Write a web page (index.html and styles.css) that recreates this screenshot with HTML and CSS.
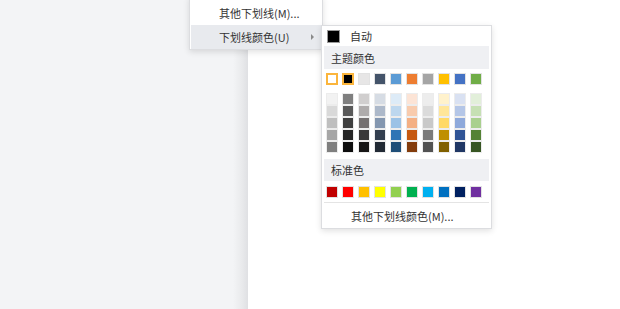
FILE: index.html
```html
<!DOCTYPE html>
<html lang="zh-CN">
<head>
<meta charset="utf-8">
<title>下划线颜色</title>
<link rel="stylesheet" href="styles.css">
</head>
<body>
<div class="page">
  <div class="sidebar"></div>
  <div class="doc"></div>
</div>

<div class="menu menu-main">
  <div class="item">其他下划线(M)...</div>
  <div class="item active">下划线颜色(U)<span class="arrow"></span></div>
</div>

<div class="menu menu-color">
  <div class="auto"><span class="auto-swatch"></span><span>自动</span></div>
  <div class="section">主题颜色</div>
  <div class="swatch-row">
    <span class="sw selected" style="background:#ffffff"></span>
    <span class="sw selected" style="background:#000000"></span>
    <span class="sw" style="background:#e7e6e6"></span>
    <span class="sw" style="background:#44546a"></span>
    <span class="sw" style="background:#5b9bd5"></span>
    <span class="sw" style="background:#ed7d31"></span>
    <span class="sw" style="background:#a5a5a5"></span>
    <span class="sw" style="background:#ffc000"></span>
    <span class="sw" style="background:#4472c4"></span>
    <span class="sw" style="background:#70ad47"></span>
  </div>
  <div class="shades">
    <span class="sw" style="background:#f2f2f2"></span><span class="sw" style="background:#d9d9d9"></span><span class="sw" style="background:#bfbfbf"></span><span class="sw" style="background:#a6a6a6"></span><span class="sw" style="background:#7f7f7f"></span>
    <span class="sw" style="background:#7f7f7f"></span><span class="sw" style="background:#595959"></span><span class="sw" style="background:#3f3f3f"></span><span class="sw" style="background:#262626"></span><span class="sw" style="background:#0d0d0d"></span>
    <span class="sw" style="background:#d0cece"></span><span class="sw" style="background:#aeabab"></span><span class="sw" style="background:#757171"></span><span class="sw" style="background:#3a3838"></span><span class="sw" style="background:#171616"></span>
    <span class="sw" style="background:#d6dce4"></span><span class="sw" style="background:#adb9ca"></span><span class="sw" style="background:#8497b0"></span><span class="sw" style="background:#333f4f"></span><span class="sw" style="background:#222a35"></span>
    <span class="sw" style="background:#ddebf7"></span><span class="sw" style="background:#bdd7ee"></span><span class="sw" style="background:#9bc2e6"></span><span class="sw" style="background:#2f75b5"></span><span class="sw" style="background:#1f4e78"></span>
    <span class="sw" style="background:#fce4d6"></span><span class="sw" style="background:#f8cbad"></span><span class="sw" style="background:#f4b084"></span><span class="sw" style="background:#c65911"></span><span class="sw" style="background:#833c0c"></span>
    <span class="sw" style="background:#ededed"></span><span class="sw" style="background:#dbdbdb"></span><span class="sw" style="background:#c9c9c9"></span><span class="sw" style="background:#7b7b7b"></span><span class="sw" style="background:#525252"></span>
    <span class="sw" style="background:#fff2cc"></span><span class="sw" style="background:#ffe699"></span><span class="sw" style="background:#ffd966"></span><span class="sw" style="background:#bf8f00"></span><span class="sw" style="background:#806000"></span>
    <span class="sw" style="background:#d9e1f2"></span><span class="sw" style="background:#b4c6e7"></span><span class="sw" style="background:#8ea9db"></span><span class="sw" style="background:#305496"></span><span class="sw" style="background:#203764"></span>
    <span class="sw" style="background:#e2efda"></span><span class="sw" style="background:#c6e0b4"></span><span class="sw" style="background:#a9d08e"></span><span class="sw" style="background:#548235"></span><span class="sw" style="background:#375623"></span>
  </div>
  <div class="section section-std">标准色</div>
  <div class="swatch-row std-row">
    <span class="sw" style="background:#c00000"></span>
    <span class="sw" style="background:#ff0000"></span>
    <span class="sw" style="background:#ffc000"></span>
    <span class="sw" style="background:#ffff00"></span>
    <span class="sw" style="background:#92d050"></span>
    <span class="sw" style="background:#00b050"></span>
    <span class="sw" style="background:#00b0f0"></span>
    <span class="sw" style="background:#0070c0"></span>
    <span class="sw" style="background:#002060"></span>
    <span class="sw" style="background:#7030a0"></span>
  </div>
  <div class="separator"></div>
  <div class="more">其他下划线颜色(M)...</div>
</div>
</body>
</html>
```

FILE: styles.css
```css
html, body {
  margin: 0;
  padding: 0;
}
body {
  width: 620px;
  height: 309px;
  overflow: hidden;
  font-family: "Noto Sans CJK SC", "Noto Sans", sans-serif;
  font-size: 11px;
  color: #333333;
  position: relative;
}
.page {
  display: flex;
  height: 309px;
}
.sidebar {
  width: 248px;
  flex: none;
  background: linear-gradient(to right, #f3f4f6 0, #f3f4f6 233px, #e9eaec 242px, #dfe0e3 248px);
}
.doc {
  flex: 1;
  background: #ffffff;
}

.menu {
  position: absolute;
  background: #ffffff;
  border: 1px solid #dcdde0;
  box-shadow: 0 2px 6px rgba(0, 0, 0, 0.12);
  box-sizing: border-box;
}

.menu-main {
  left: 189px;
  top: -4px;
  width: 134px;
  padding: 4px 1px 0;
  z-index: 1;
}
.item {
  height: 24px;
  display: flex;
  align-items: center;
  padding-left: 28px;
}
.item.active {
  background: #e8eaee;
}
.arrow {
  margin-left: auto;
  margin-right: 7px;
  width: 0;
  height: 0;
  border-left: 3px solid #8a8a8a;
  border-top: 3px solid transparent;
  border-bottom: 3px solid transparent;
}

.menu-color {
  left: 321px;
  top: 25px;
  width: 171px;
  z-index: 2;
}
.auto {
  height: 20px;
  display: flex;
  align-items: center;
  padding-left: 5px;
}
.auto-swatch {
  width: 13px;
  height: 13px;
  box-sizing: border-box;
  background: #000000;
  border: 1px solid #9a9a9a;
  margin-right: 10px;
}
.section {
  margin: 0 2px;
  height: 23px;
  display: flex;
  align-items: center;
  padding-left: 7px;
  background: #eff0f3;
}
.swatch-row {
  display: flex;
  gap: 4px;
  padding-left: 4px;
  margin-top: 4px;
}
.sw {
  display: block;
  width: 12px;
  height: 12px;
  box-sizing: border-box;
  border: 1px solid #e2e2e2;
}
.sw.selected {
  border: 2px solid #fbb53c;
}
.shades {
  display: grid;
  grid-template-columns: repeat(10, 12px);
  grid-template-rows: repeat(5, 12px);
  grid-auto-flow: column;
  column-gap: 4px;
  margin-top: 8px;
  padding-left: 4px;
}
.shades .sw {
  border-color: #ececec;
}
.section-std {
  margin-top: 6px;
  height: 22px;
}
.std-row {
  margin-top: 5px;
}
.separator {
  margin: 4px 2px 0;
  height: 1px;
  background: #e4e4e4;
}
.more {
  height: 25px;
  display: flex;
  align-items: center;
  padding-left: 29px;
}
```
